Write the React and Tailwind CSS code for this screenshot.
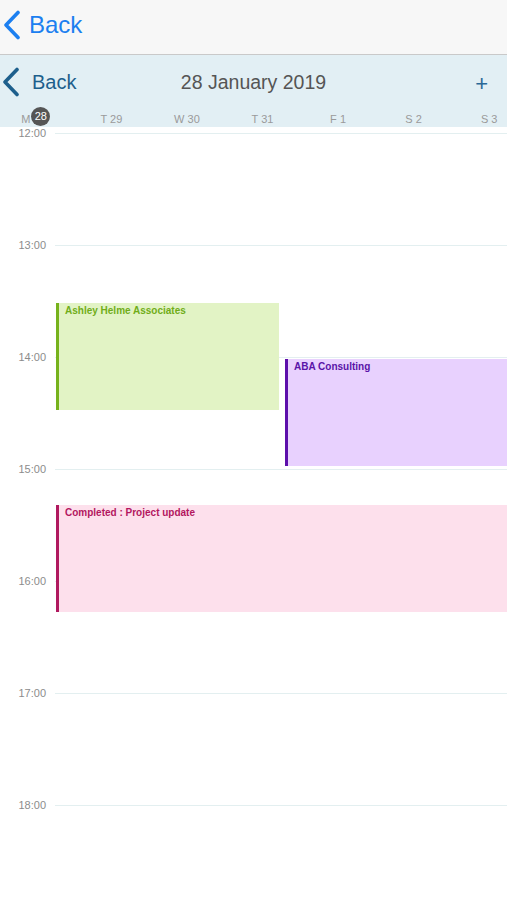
import React from "react";

const Chevron = ({ color }) => (
  <svg width="20" height="30" viewBox="0 0 20 30" fill="none">
    <path d="M16 2.5 L4 15 L16 27.5" stroke={color} strokeWidth="3.6" strokeLinecap="round" strokeLinejoin="round" />
  </svg>
);

const hours = ["12:00", "13:00", "14:00", "15:00", "16:00", "17:00", "18:00"];
const days = [
  { d: "T", n: "29" },
  { d: "W", n: "30" },
  { d: "T", n: "31" },
  { d: "F", n: "1" },
  { d: "S", n: "2" },
  { d: "S", n: "3" },
];

export default function App() {
  return (
    <div className="w-[507px] h-[900px] overflow-hidden bg-white" style={{ fontFamily: '"Liberation Sans", Arial, sans-serif' }}>
      {/* Top nav */}
      <div className="h-[55px] bg-[#f7f7f7] border-b border-[#c9c9c9] flex items-center pb-[5px]">
        <div className="ml-[2px] flex items-center">
          <Chevron color="#1c7ff0" />
          <span className="ml-[7px] text-[24px] text-[#1c7ff0] leading-none">Back</span>
        </div>
      </div>

      {/* Calendar header */}
      <div className="bg-[#e2eff4] h-[72px] flex flex-col">
        <div className="h-[52px] flex items-center relative pt-[2px]">
          <div className="ml-[1px] flex items-center">
            <Chevron color="#1d5f8c" />
            <span className="ml-[11px] text-[20px] text-[#1d5f8c] leading-none">Back</span>
          </div>
          <div className="absolute left-0 right-0 text-center text-[19.5px] text-[#555] leading-none pointer-events-none pt-[2px]">28 January 2019</div>
          <div className="ml-auto mr-[19px] text-[22px] text-[#2a6896] leading-none pt-[3px]">+</div>
        </div>
        <div className="h-[20px]">
          <div className="w-[507px] overflow-visible">
            <div className="w-[529px] ml-[-2px] grid grid-cols-7 items-center h-[20px] text-[11px] text-[#9a9a9a]">
              <div className="flex items-center justify-center">
                <span>M</span>
                <span className="ml-[1px] mb-[5px] w-[19px] h-[19px] rounded-full bg-[#555] text-white flex items-center justify-center text-[11px]">28</span>
              </div>
              {days.map((x, i) => (
                <div key={i} className="text-center whitespace-pre">{x.d} {x.n}</div>
              ))}
            </div>
          </div>
        </div>
      </div>

      {/* Timeline */}
      <div className="relative">
        {hours.map((h) => (
          <div key={h} className="h-[112px]">
            <div className="h-[12px] flex items-center">
              <div className="w-[46px] text-right text-[11px] text-[#8c8c8c] leading-none">{h}</div>
              <div className="flex-1 ml-[9px] h-px bg-[#e3eff0]"></div>
            </div>
          </div>
        ))}

        <div className="absolute top-[176px] left-[56px] w-[223px] h-[107px] bg-[#e2f3c5] border-l-[3px] border-[#76b21c] pl-[6px]">
          <div className="text-[10px] font-bold text-[#70ad19]">Ashley Helme Associates</div>
        </div>
        <div className="absolute top-[232px] left-[285px] right-0 h-[107px] bg-[#e8d1fe] border-l-[3px] border-[#5d0fab] pl-[6px]">
          <div className="text-[10px] font-bold text-[#5a14a8]">ABA Consulting</div>
        </div>
        <div className="absolute top-[378px] left-[56px] right-0 h-[107px] bg-[#fde0ec] border-l-[3px] border-[#b0195f] pl-[6px]">
          <div className="text-[10px] font-bold text-[#b3165f]">Completed : Project update</div>
        </div>
      </div>
    </div>
  );
}
